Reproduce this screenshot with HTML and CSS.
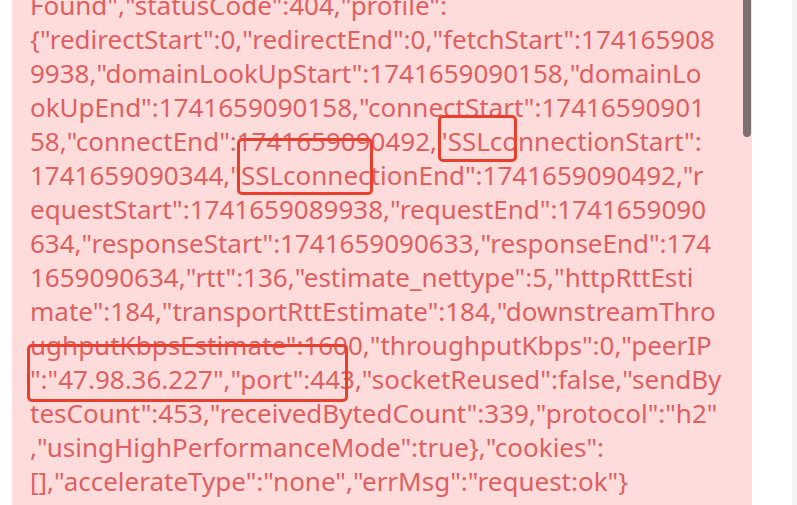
FILE: index.html
```html
<!DOCTYPE html>
<html>
<head>
<meta charset="utf-8">
<link rel="stylesheet" href="styles.css">
</head>
<body>
<div class="page">
  <div class="gutter"></div>
  <div class="panel">
    <div class="log">
      <div class="ln">Found","statusCode":404,"profile":</div>
      <div class="ln">{"redirectStart":0,"redirectEnd":0,"fetchStart":174165908</div>
      <div class="ln">9938,"domainLookUpStart":1741659090158,"domainLo</div>
      <div class="ln">okUpEnd":1741659090158,"connectStart":17416590901</div>
      <div class="ln">58,"connectEnd":1741659090492,"SSLconnectionStart":</div>
      <div class="ln">1741659090344,"SSLconnectionEnd":1741659090492,"r</div>
      <div class="ln">equestStart":1741659089938,"requestEnd":1741659090</div>
      <div class="ln">634,"responseStart":1741659090633,"responseEnd":174</div>
      <div class="ln">1659090634,"rtt":136,"estimate_nettype":5,"httpRttEsti</div>
      <div class="ln">mate":184,"transportRttEstimate":184,"downstreamThro</div>
      <div class="ln">ughputKbpsEstimate":1600,"throughputKbps":0,"peerIP</div>
      <div class="ln">":"47.98.36.227","port":443,"socketReused":false,"sendBy</div>
      <div class="ln">tesCount":453,"receivedBytedCount":339,"protocol":"h2"</div>
      <div class="ln">,"usingHighPerformanceMode":true},"cookies":</div>
      <div class="ln">[],"accelerateType":"none","errMsg":"request:ok"}</div>
    </div>
    <div class="scrollbar"></div>
    <div class="mark mark-a"></div>
    <div class="mark mark-b"></div>
    <div class="mark mark-c"></div>
  </div>
  <div class="side"></div>
  <div class="edge"></div>
</div>
</body>
</html>
```
FILE: styles.css
```css
html, body {
  margin: 0;
  padding: 0;
  background: #ffffff;
  overflow: hidden;
}
.page {
  display: flex;
  width: 797px;
  height: 505px;
  overflow: hidden;
}
.gutter {
  width: 12px;
  flex: none;
  background: #ffffff;
}
.panel {
  position: relative;
  width: 740px;
  flex: none;
  background: #fedcdc;
  overflow: hidden;
}
.log {
  margin-top: -12px;
  padding-left: 18px;
  font-family: "Noto Sans", sans-serif;
  font-size: 26px;
  line-height: 34px;
  color: #e0605f;
}
.ln {
  white-space: nowrap;
}
.scrollbar {
  position: absolute;
  left: 731px;
  top: -10px;
  width: 8px;
  height: 147px;
  border-radius: 4px;
  background: #7c6f71;
}
.mark {
  position: absolute;
  border: 3px solid #e8402c;
  border-radius: 5px;
  box-sizing: border-box;
}
.mark-a { left: 426px; top: 115px; width: 79px; height: 47px; }
.mark-b { left: 225px; top: 138px; width: 136px; height: 57px; }
.mark-c { left: 15px; top: 344px; width: 321px; height: 58px; }
.side {
  width: 40px;
  flex: none;
  background: #ffffff;
}
.edge {
  flex: 1;
  background: #f4f4f4;
}
```
